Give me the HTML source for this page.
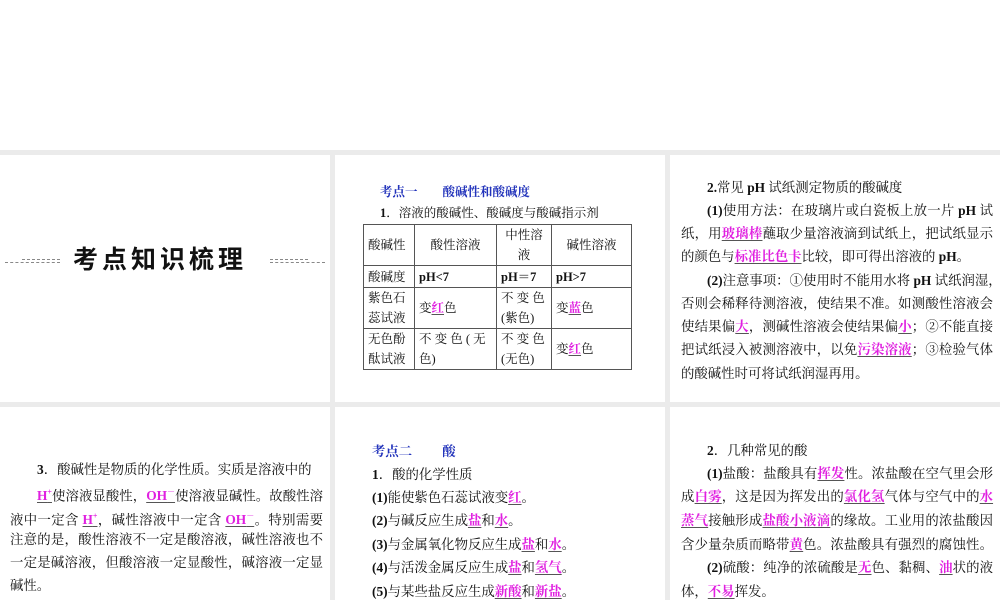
<!DOCTYPE html>
<html><head><meta charset="utf-8"><style>
*{margin:0;padding:0;box-sizing:border-box}
body{width:1000px;height:600px;background:#fff;position:relative;overflow:hidden;font-family:"Liberation Serif","Noto Serif CJK SC",serif;color:#111;font-size:13.4px}
.bg{position:absolute;left:0;top:150px;width:1000px;height:450px;background:#ebebeb}
.p{position:absolute;background:#fff}
.l{position:absolute;white-space:nowrap;line-height:18px;height:18px}
.j{text-align:justify;text-align-last:justify}
.m{color:#e020e0;font-weight:bold;text-decoration:underline;text-decoration-color:#555;text-underline-offset:2px}
.b{color:#2233bb;font-weight:bold}
b{font-weight:bold}
table{position:absolute;left:363px;top:224px;border-collapse:collapse;font-size:12.5px;table-layout:fixed;width:268px}
td{border:1px solid #555;padding:0 4px;line-height:20px;vertical-align:middle;white-space:nowrap;overflow:hidden}
</style></head><body>
<div class="bg"></div>
<div class="p" style="left:0;top:155px;width:330px;height:247px"></div>
<div class="p" style="left:335px;top:155px;width:330px;height:247px"></div>
<div class="p" style="left:670px;top:155px;width:330px;height:247px"></div>
<div class="p" style="left:0;top:407px;width:330px;height:193px"></div>
<div class="p" style="left:335px;top:407px;width:330px;height:193px"></div>
<div class="p" style="left:670px;top:407px;width:330px;height:193px"></div>

<div style="position:absolute;left:5px;top:262px;width:55px;border-top:1px dashed #888"></div>
<div style="position:absolute;left:22px;top:259px;width:38px;border-top:1px dashed #888"></div>
<div style="position:absolute;left:270px;top:262px;width:55px;border-top:1px dashed #888"></div>
<div style="position:absolute;left:270px;top:259px;width:38px;border-top:1px dashed #888"></div>
<div class="l" style="left:73px;top:246px;height:28px;line-height:28px;font-family:'Liberation Sans','Noto Sans CJK SC',sans-serif;font-weight:bold;font-size:25px;letter-spacing:4px;color:#111">考点知识梳理</div>

<div class="l b" style="left:380px;top:183px;font-size:12.5px">考点一&nbsp;&nbsp;&nbsp;&nbsp;&nbsp;&nbsp;&nbsp;&nbsp;酸碱性和酸碱度</div>
<div class="l" style="left:380px;top:204px;font-size:12.5px"><b>1</b>．溶液的酸碱性、酸碱度与酸碱指示剂</div>
<table>
<colgroup><col style="width:51px"><col style="width:82px"><col style="width:55px"><col style="width:80px"></colgroup>
<tr style="height:41px"><td>酸碱性</td><td style="text-align:center">酸性溶液</td><td style="text-align:center">中性溶<br>液</td><td style="text-align:center">碱性溶液</td></tr>
<tr style="height:22px"><td>酸碱度</td><td><b>pH&lt;7</b></td><td><b>pH＝7</b></td><td><b>pH&gt;7</b></td></tr>
<tr style="height:40px"><td>紫色石<br>蕊试液</td><td>变<span class="m">红</span>色</td><td>不 变 色<br>(紫色)</td><td>变<span class="m">蓝</span>色</td></tr>
<tr style="height:41px"><td>无色酚<br>酞试液</td><td>不 变 色 ( 无<br>色)</td><td>不 变 色<br>(无色)</td><td>变<span class="m">红</span>色</td></tr>
</table>

<div class="l" style="left:707px;top:179px"><b>2.</b>常见 <b>pH</b> 试纸测定物质的酸碱度</div>
<div class="l j" style="left:707px;top:202px;width:286px"><b>(1)</b>使用方法：在玻璃片或白瓷板上放一片 <b>pH</b> 试</div>
<div class="l j" style="left:681px;top:225px;width:312px">纸，用<span class="m">玻璃棒</span>蘸取少量溶液滴到试纸上，把试纸显示</div>
<div class="l" style="left:681px;top:248px">的颜色与<span class="m">标准比色卡</span>比较，即可得出溶液的 <b>pH</b>。</div>
<div class="l j" style="left:707px;top:272px;width:286px"><b>(2)</b>注意事项：①使用时不能用水将 <b>pH</b> 试纸润湿，</div>
<div class="l j" style="left:681px;top:295px;width:312px">否则会稀释待测溶液，使结果不准。如测酸性溶液会</div>
<div class="l j" style="left:681px;top:318px;width:312px">使结果偏<span class="m">大</span>，测碱性溶液会使结果偏<span class="m">小</span>；②不能直接</div>
<div class="l j" style="left:681px;top:341px;width:312px">把试纸浸入被测溶液中，以免<span class="m">污染溶液</span>；③检验气体</div>
<div class="l" style="left:681px;top:365px">的酸碱性时可将试纸润湿再用。</div>

<div class="l" style="left:37px;top:461px"><b>3</b>．酸碱性是物质的化学性质。实质是溶液中的</div>
<div class="l j" style="left:37px;top:484px;width:286px"><span class="m">H<sup style="font-size:8px">+</sup></span>使溶液显酸性，<span class="m">OH<sup style="font-size:8px">－</sup></span>使溶液显碱性。故酸性溶</div>
<div class="l j" style="left:10px;top:508px;width:313px">液中一定含 <span class="m">H<sup style="font-size:8px">+</sup></span>，碱性溶液中一定含 <span class="m">OH<sup style="font-size:8px">－</sup></span>。特别需要</div>
<div class="l j" style="left:10px;top:531px;width:313px">注意的是，酸性溶液不一定是酸溶液，碱性溶液也不</div>
<div class="l j" style="left:10px;top:554px;width:313px">一定是碱溶液，但酸溶液一定显酸性，碱溶液一定显</div>
<div class="l" style="left:10px;top:577px">碱性。</div>

<div class="l b" style="left:372px;top:443px">考点二&nbsp;&nbsp;&nbsp;&nbsp;&nbsp;&nbsp;&nbsp;&nbsp;&nbsp;酸</div>
<div class="l" style="left:372px;top:466px"><b>1</b>．酸的化学性质</div>
<div class="l" style="left:372px;top:489px"><b>(1)</b>能使紫色石蕊试液变<span class="m">红</span>。</div>
<div class="l" style="left:372px;top:512px"><b>(2)</b>与碱反应生成<span class="m">盐</span>和<span class="m">水</span>。</div>
<div class="l" style="left:372px;top:536px"><b>(3)</b>与金属氧化物反应生成<span class="m">盐</span>和<span class="m">水</span>。</div>
<div class="l" style="left:372px;top:559px"><b>(4)</b>与活泼金属反应生成<span class="m">盐</span>和<span class="m">氢气</span>。</div>
<div class="l" style="left:372px;top:583px"><b>(5)</b>与某些盐反应生成<span class="m">新酸</span>和<span class="m">新盐</span>。</div>

<div class="l" style="left:707px;top:442px"><b>2</b>．几种常见的酸</div>
<div class="l j" style="left:707px;top:465px;width:286px"><b>(1)</b>盐酸：盐酸具有<span class="m">挥发</span>性。浓盐酸在空气里会形</div>
<div class="l j" style="left:681px;top:488px;width:312px">成<span class="m">白雾</span>，这是因为挥发出的<span class="m">氯化氢</span>气体与空气中的<span class="m">水</span></div>
<div class="l j" style="left:681px;top:512px;width:312px"><span class="m">蒸气</span>接触形成<span class="m">盐酸小液滴</span>的缘故。工业用的浓盐酸因</div>
<div class="l j" style="left:681px;top:536px;width:312px">含少量杂质而略带<span class="m">黄</span>色。浓盐酸具有强烈的腐蚀性。</div>
<div class="l j" style="left:707px;top:559px;width:286px"><b>(2)</b>硫酸：纯净的浓硫酸是<span class="m">无</span>色、黏稠、<span class="m">油</span>状的液</div>
<div class="l" style="left:681px;top:583px">体，<span class="m">不易</span>挥发。</div>
</body></html>
